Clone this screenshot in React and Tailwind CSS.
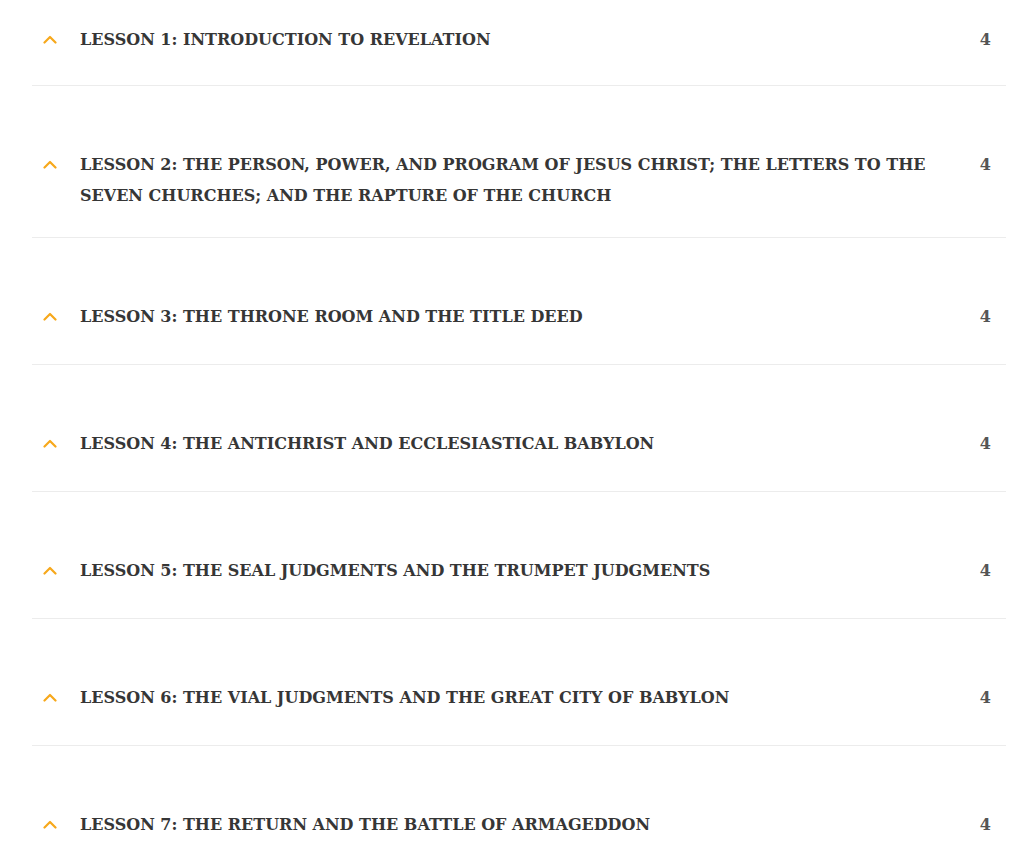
import React from "react";

const lessons = [
  "LESSON 1: INTRODUCTION TO REVELATION",
  "LESSON 2: THE PERSON, POWER, AND PROGRAM OF JESUS CHRIST; THE LETTERS TO THE SEVEN CHURCHES; AND THE RAPTURE OF THE CHURCH",
  "LESSON 3: THE THRONE ROOM AND THE TITLE DEED",
  "LESSON 4: THE ANTICHRIST AND ECCLESIASTICAL BABYLON",
  "LESSON 5: THE SEAL JUDGMENTS AND THE TRUMPET JUDGMENTS",
  "LESSON 6: THE VIAL JUDGMENTS AND THE GREAT CITY OF BABYLON",
  "LESSON 7: THE RETURN AND THE BATTLE OF ARMAGEDDON",
];

function Chevron() {
  return (
    <svg width="14" height="9" viewBox="0 0 14 9" fill="none">
      <polyline points="1.5,7.5 7,2 12.5,7.5" stroke="#f7a81b" strokeWidth="2.2" strokeLinecap="round" strokeLinejoin="round" />
    </svg>
  );
}

export default function App() {
  return (
    <div className="min-h-[849px] bg-white pl-[32px] pr-[18px]" style={{ fontFamily: '"DejaVu Serif", "Liberation Serif", serif' }}>
      {lessons.map((t, i) => (
        <div key={i} className={`border-b border-[#ececec] ${i === 0 ? "pt-[22px] pb-[24px]" : "pt-[61px] pb-[26px]"}`}>
          <div className="flex items-start min-h-[39px]">
            <div className="w-[48px] shrink-0 flex justify-start pl-[11px] pt-[13px]">
              <Chevron />
            </div>
            <div className="flex-1 pr-[40px] text-[16px] leading-[31px] font-bold text-[#363636] pt-[2px]">
              {t}
            </div>
            <div className="shrink-0 pr-[15px] text-[16px] leading-[31px] font-bold text-[#555555] pt-[2px]">
              4
            </div>
          </div>
        </div>
      ))}
    </div>
  );
}
